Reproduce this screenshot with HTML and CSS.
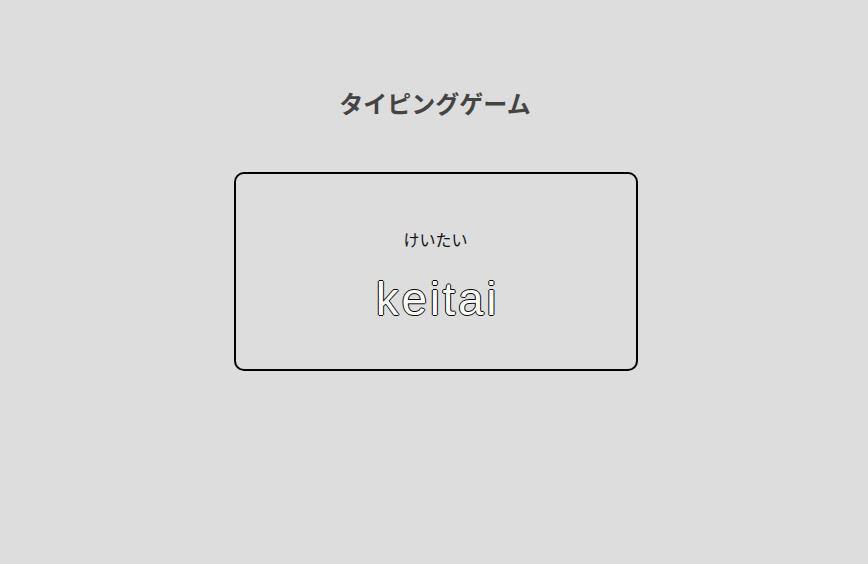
FILE: index.html
```html
<!DOCTYPE html>
<html lang="ja">
<head>
<meta charset="utf-8">
<title>タイピングゲーム</title>
<link rel="stylesheet" href="styles.css">
</head>
<body>
<main class="app">
  <h1 class="title">タイピングゲーム</h1>
  <section class="card">
    <p class="kana">けいたい</p>
    <p class="romaji">keitai</p>
  </section>
</main>
</body>
</html>
```
FILE: styles.css
```css
html, body {
  margin: 0;
  padding: 0;
  background: #dddddd;
  height: 100%;
}
.app {
  display: flex;
  flex-direction: column;
  align-items: center;
  padding-top: 86px;
  padding-left: 2px;
  font-family: "Liberation Sans", "Noto Sans CJK JP", sans-serif;
}
.title {
  margin: 0;
  font-size: 24px;
  line-height: 34px;
  font-weight: bold;
  color: #444444;
  font-family: "Noto Sans CJK JP", sans-serif;
}
.card {
  margin-top: 52px;
  margin-left: 1px;
  box-sizing: border-box;
  width: 404px;
  height: 199px;
  border: 2px solid #000;
  border-radius: 10px;
  padding-top: 55px;
  display: flex;
  flex-direction: column;
  align-items: center;
}
.kana {
  margin: 0;
  font-size: 16px;
  line-height: 20px;
  color: #111;
  font-family: "Noto Sans CJK JP", sans-serif;
}
.romaji {
  margin: 25px 0 0;
  padding-left: 4px;
  font-size: 46px;
  line-height: 50px;
  letter-spacing: 2.7px;
  color: #fff;
  font-family: "Liberation Sans", sans-serif;
  text-shadow: 1px 0 0 #000, -1px 0 0 #000, 0 1px 0 #000, 0 -1px 0 #000;
}
```
